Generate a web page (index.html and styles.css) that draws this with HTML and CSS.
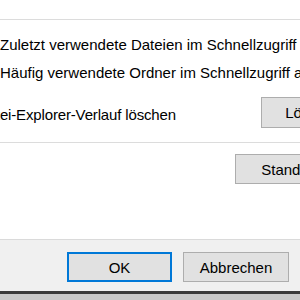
FILE: index.html
```html
<!DOCTYPE html>
<html lang="de">
<head>
<meta charset="utf-8">
<title>Ordneroptionen</title>
<link rel="stylesheet" href="styles.css">
</head>
<body>
<div class="dialog">
  <div class="page">
    <div class="group">
      <div class="check check-first">Zuletzt verwendete Dateien im Schnellzugriff anzeigen</div>
      <div class="check">Häufig verwendete Ordner im Schnellzugriff anzeigen</div>
      <div class="history">
        <span class="history-label">Datei-Explorer-Verlauf löschen</span>
        <button class="btn btn-clear">Löschen</button>
      </div>
    </div>
    <div class="restore">
      <button class="btn btn-restore">Standardwerte</button>
    </div>
  </div>
  <div class="footer">
    <button class="btn btn-default">OK</button>
    <button class="btn">Abbrechen</button>
    <button class="btn" disabled>Übernehmen</button>
  </div>
  <div class="edge"></div>
</div>
</body>
</html>
```
FILE: styles.css
```css
html, body {
  margin: 0;
  padding: 0;
}
body {
  width: 300px;
  height: 300px;
  overflow: hidden;
  background: #c8c8c8;
  font-family: "Liberation Sans", Arial, sans-serif;
  font-size: 15px;
  color: #000;
}
.dialog {
  width: 300px;
}
.page {
  background: #fff;
  border-bottom: 1px solid #dadada;
  padding-top: 19px;
  box-sizing: border-box;
  height: 240px;
}
.group {
  border-top: 1px solid #dcdcdc;
  border-bottom: 1px solid #dcdcdc;
  padding: 15px 0 14px;
}
.check {
  line-height: 20px;
  height: 20px;
  white-space: nowrap;
}
.check + .check {
  margin-top: 8px;
}
.history {
  display: grid;
  grid-template-columns: 284px 105px;
  margin: 14px 0 0 -23px;
  white-space: nowrap;
}
.history-label {
  line-height: 20px;
  margin-top: 8px;
  letter-spacing: -0.15px;
}
.btn {
  font: inherit;
  color: #000;
  background: #e1e1e1;
  border: 1px solid #adadad;
  border-radius: 0;
  height: 30px;
  padding: 0;
  margin: 0;
  flex-shrink: 0;
  white-space: nowrap;
}
.btn-clear {
  width: 105px;
  height: 31px;
}
.restore {
  display: flex;
  margin-top: 11px;
  padding-left: 235px;
}
.btn-restore {
  width: 150px;
}
.footer {
  background: #f0f0f0;
  height: 51px;
  display: flex;
  gap: 11px;
  padding: 12px 0 0 67px;
  box-sizing: border-box;
}
.footer .btn {
  width: 105px;
}
.footer .btn + .btn {
  width: 106px;
}
.btn-default {
  border: 2px solid #0078d7;
}
.btn:disabled {
  color: #a0a0a0;
  border-color: #bfbfbf;
  background: #ccc;
}
.edge {
  height: 3px;
  background: #3a3a3a;
}
```
